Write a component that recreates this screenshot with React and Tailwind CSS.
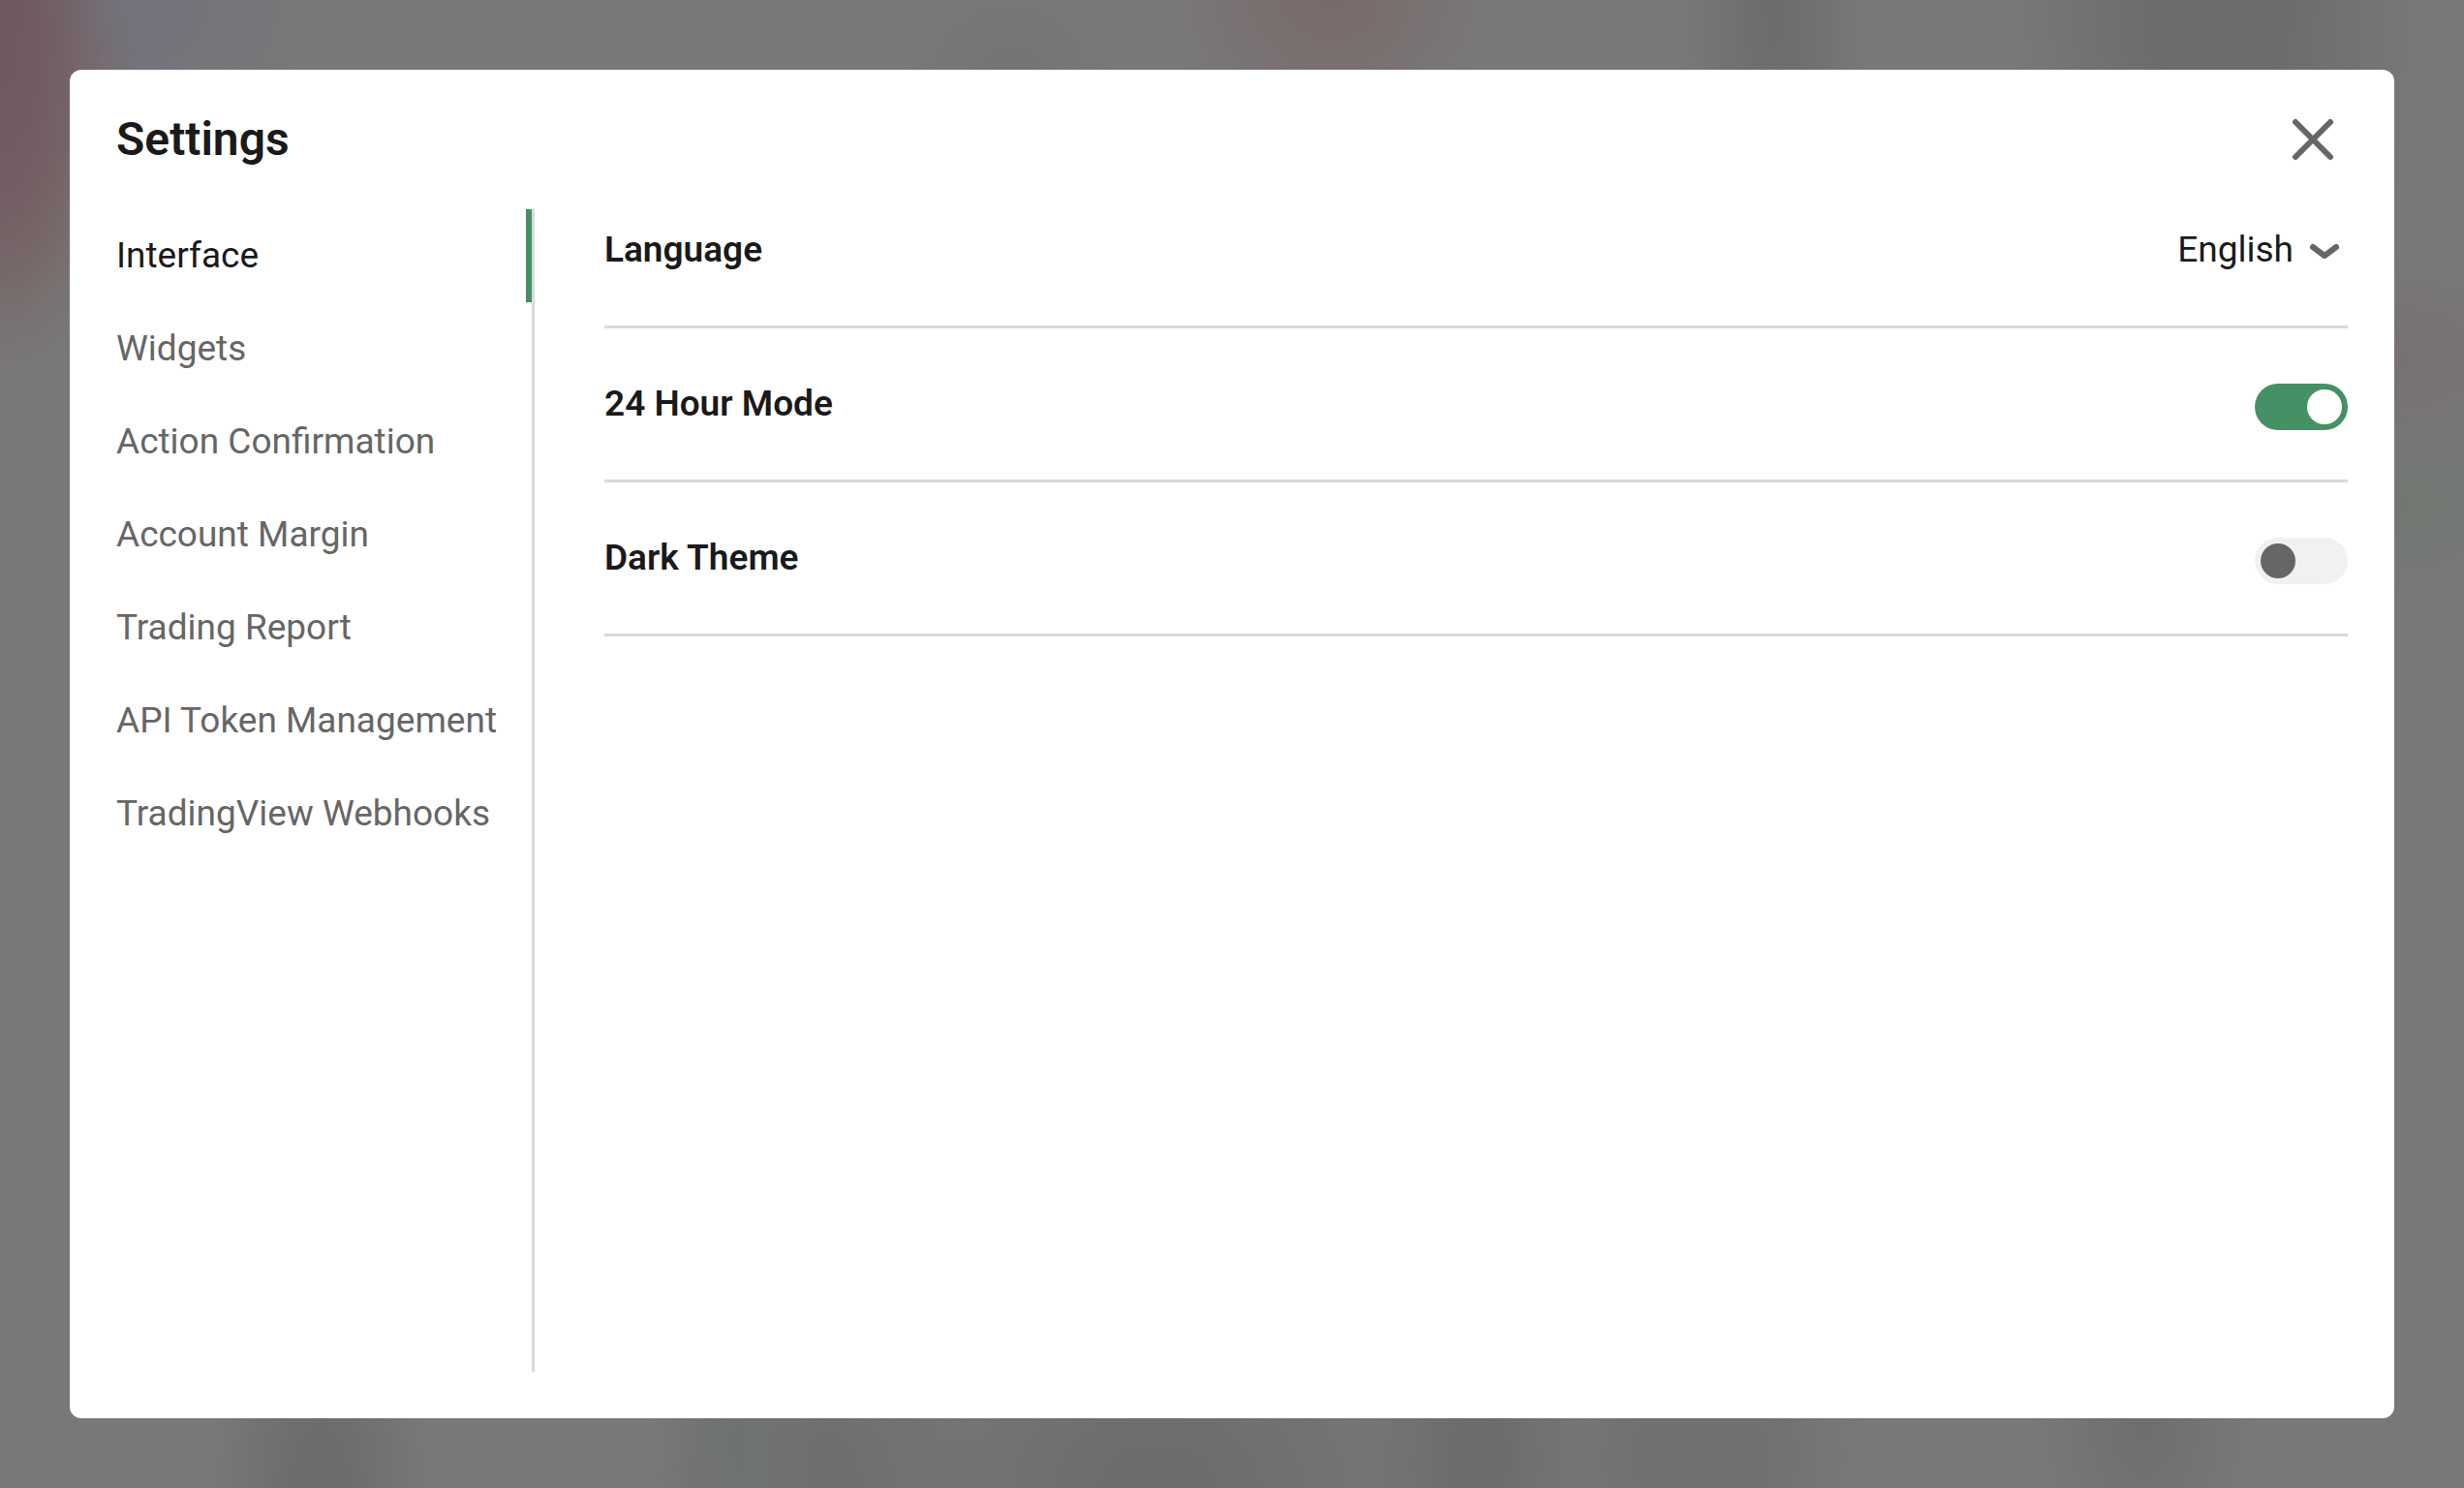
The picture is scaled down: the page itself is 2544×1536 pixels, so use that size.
import { useState } from 'react'

const TABS = [
  'Interface',
  'Widgets',
  'Action Confirmation',
  'Account Margin',
  'Trading Report',
  'API Token Management',
  'TradingView Webhooks',
]

// soft shapes of the dimmed page behind the dialog
const BACKDROP =
  'bg-[#797979] bg-[radial-gradient(110px_340px_at_0%_0%,#6f5862_15%,transparent),radial-gradient(150px_280px_at_0%_8%,#775f5f_10%,transparent),radial-gradient(210px_180px_at_5%_0%,#73737b_30%,transparent),radial-gradient(120px_110px_at_41%_5%,#747474_10%,transparent),radial-gradient(180px_150px_at_54%_0%,#796b6b_10%,transparent),radial-gradient(100px_380px_at_72%_0%,#6d6d6d_15%,transparent),radial-gradient(220px_420px_at_90%_0%,#6c6c6c_30%,transparent),radial-gradient(220px_120px_at_97%_24%,#777171_10%,transparent),radial-gradient(220px_120px_at_97%_34%,#727772_10%,transparent),radial-gradient(120px_240px_at_13%_100%,#6c6c6c_20%,transparent),radial-gradient(90px_240px_at_30%_97%,#6f736f_10%,transparent),radial-gradient(180px_240px_at_33%_100%,#6e6e6e_20%,transparent),radial-gradient(320px_240px_at_47%_100%,#6d6d6d_20%,transparent),radial-gradient(120px_240px_at_60%_98%,#6c6c6c_20%,transparent),radial-gradient(180px_200px_at_69%_98%,#6e716f_30%,transparent),radial-gradient(120px_180px_at_87%_96%,#6f6f6f_10%,transparent)]'

export default function App() {
  const [tab, setTab] = useState('Interface')
  const [hour24, setHour24] = useState(true)
  const [dark, setDark] = useState(false)

  return (
    <div className={`flex min-h-screen p-[72px] font-[Roboto,sans-serif] text-[37px] leading-[42px] text-[#1a1a1a] ${BACKDROP}`}>
      <div role="dialog" aria-labelledby="settings-title" className="flex flex-1 flex-col rounded-xl bg-white px-12 pb-12">
        <header className="flex h-36 items-center justify-between">
          <h1 id="settings-title" className="text-[48px] leading-[54px] font-semibold">Settings</h1>
          <button type="button" aria-label="Close" className="size-[72px] cursor-pointer text-[#666]">
            <CloseIcon />
          </button>
        </header>

        <div className="flex flex-1">
          <nav className="flex w-[432px] shrink-0 flex-col border-r-3 border-[#d9d9d9]">
            {TABS.map((name) => (
              <button
                key={name}
                type="button"
                onClick={() => setTab(name)}
                className={`h-24 cursor-pointer border-r-6 text-left whitespace-nowrap ${tab === name ? 'border-[#469066]' : 'border-transparent text-[#666]'}`}
              >
                {name}
              </button>
            ))}
          </nav>

          <main className="ml-[72px] flex-1">
            <Row id="language" label="Language" first>
              <div className="grid items-start justify-items-end">
                <select id="language" className="col-start-1 row-start-1 cursor-pointer appearance-none pr-14 text-right outline-none [text-align-last:right]">
                  <option>English</option>
                </select>
                <ChevronIcon />
              </div>
            </Row>
            <Row id="hour24" label="24 Hour Mode">
              <Toggle id="hour24" checked={hour24} onChange={setHour24} />
            </Row>
            <Row id="dark" label="Dark Theme">
              <Toggle id="dark" checked={dark} onChange={setDark} />
            </Row>
          </main>
        </div>
      </div>
    </div>
  )
}

function Row({ id, label, first, children }) {
  return (
    <div className={`flex items-start justify-between border-b-3 border-[#d9d9d9] pb-[51px] ${first ? 'pt-[21px]' : 'pt-[57px]'}`}>
      <label htmlFor={id} className="font-semibold">{label}</label>
      <div className="h-12">{children}</div>
    </div>
  )
}

function Toggle({ id, checked, onChange }) {
  return (
    <input
      id={id}
      type="checkbox"
      role="switch"
      checked={checked}
      onChange={(e) => onChange(e.target.checked)}
      className="block h-12 w-24 cursor-pointer appearance-none rounded-full bg-[#f1f1f1] p-1.5 before:block before:size-9 before:rounded-full before:bg-[#666] checked:bg-[#469066] checked:before:ml-12 checked:before:bg-white"
    />
  )
}

function CloseIcon() {
  return (
    <svg className="size-full" viewBox="0 0 72 72" fill="none" stroke="currentColor" strokeWidth="6" strokeLinecap="round">
      <path d="M18 18L54 54M54 18L18 54" />
    </svg>
  )
}

function ChevronIcon() {
  return (
    <svg className="pointer-events-none col-start-1 row-start-1 size-12 text-[#666]" viewBox="0 0 48 48" fill="none" stroke="currentColor" strokeWidth="6" strokeLinecap="round" strokeLinejoin="round">
      <path d="M12 18L24 27L36 18" />
    </svg>
  )
}
